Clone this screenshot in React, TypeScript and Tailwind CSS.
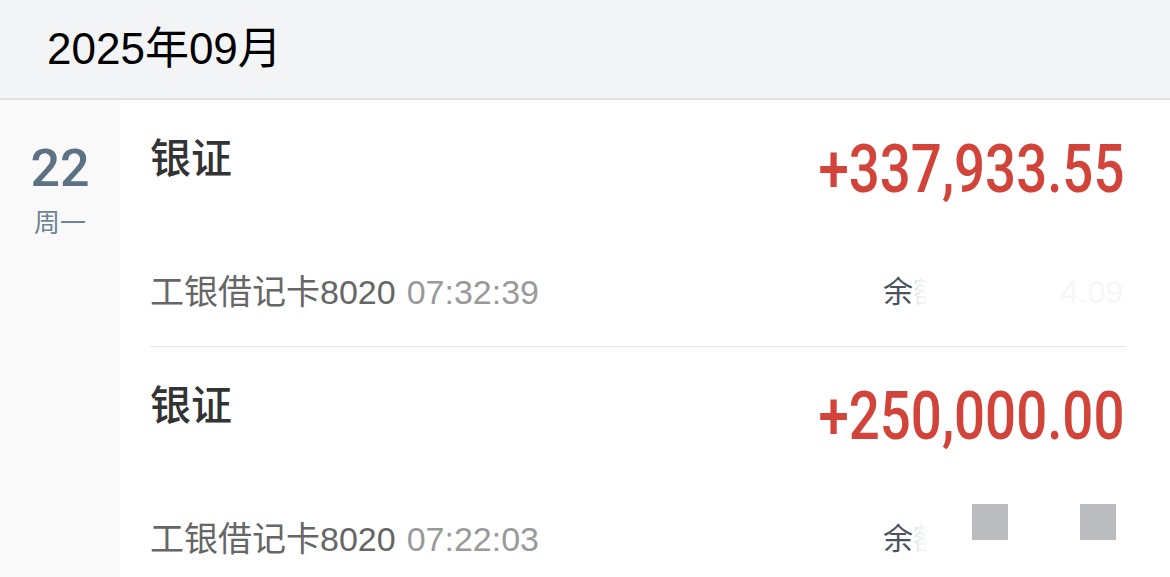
import type React from "react"

type Item = {
  title: string
  amount: string
  card: string
  time: string
  masked: "fade" | "squares"
}

const items: Item[] = [
  { title: "银证", amount: "+337,933.55", card: "工银借记卡8020", time: "07:32:39", masked: "fade" },
  { title: "银证", amount: "+250,000.00", card: "工银借记卡8020", time: "07:22:03", masked: "squares" },
]

const roboto: React.CSSProperties = { fontFamily: "Roboto, sans-serif" }

function Row({ item, last }: { item: Item; last: boolean }) {
  return (
    <div className={`relative mr-[44px] ${last ? "" : "border-b border-[#e6e6e6]"}`}>
      <div className="flex h-[140px] items-start justify-between pt-[29px]">
        <span className="text-[41px] font-medium leading-[60px] text-[#333333]">{item.title}</span>
        <span
          className="mr-[2px] origin-right scale-x-[0.815] text-[67px] font-medium leading-[80px] text-[#d2433a]"
          style={roboto}
        >
          {item.amount}
        </span>
      </div>
      <div className="flex h-[106px] items-start pt-[27px]">
        <span className="text-[34px] leading-[50px] text-[#666666]">{item.card}</span>
        <span className="ml-[11px] text-[34px] leading-[50px] text-[#9a9a9a]">{item.time}</span>
        <span className="ml-auto flex w-[243px] items-center text-[30px] leading-[50px]">
          <span className="text-[#4b5260]">余</span>
          <span className="bg-gradient-to-r from-[#dde0e4] via-white to-white bg-clip-text text-transparent">额</span>
          {item.masked === "fade" ? (
            <span className="ml-auto mr-[3px] text-[32px] text-[#f6f6f6]">4.09</span>
          ) : null}
        </span>
      </div>
      {item.masked === "squares" ? (
        <>
          <div className="absolute left-[822px] top-[157px] h-[36px] w-[36px] bg-[#babcc0]" />
          <div className="absolute left-[930px] top-[157px] h-[36px] w-[36px] bg-[#babcc0]" />
        </>
      ) : null}
    </div>
  )
}

export default function App() {
  return (
    <div
      className="h-[577px] w-[1170px] overflow-hidden bg-white"
      style={{ fontFamily: '"Liberation Sans", "Noto Sans CJK SC", sans-serif' }}
    >
      <div className="flex h-[100px] items-center border-b-2 border-[#e2e2e2] bg-[#f3f4f6] pl-[47px]">
        <span className="text-[44px] leading-none text-black">2025年09月</span>
      </div>
      <div className="flex">
        <div className="flex w-[120px] shrink-0 flex-col items-center bg-[#f9f9f9] pt-[42px] pb-[400px]">
          <span className="text-[52px] font-medium leading-[54px] text-[#5c7183]" style={roboto}>
            22
          </span>
          <span className="mt-[10px] text-[26px] leading-[34px] text-[#708495]">周一</span>
        </div>
        <div className="flex-1 pl-[30px]">
          {items.map((item, i) => (
            <Row key={i} item={item} last={i === items.length - 1} />
          ))}
        </div>
      </div>
    </div>
  )
}
